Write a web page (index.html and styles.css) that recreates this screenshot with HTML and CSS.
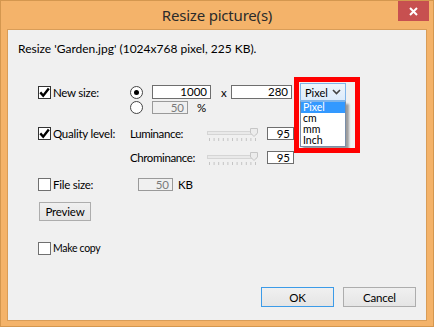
FILE: index.html
```html
<!DOCTYPE html>
<html>
<head>
<meta charset="utf-8">
<link rel="stylesheet" href="styles.css">
</head>
<body>
<div class="window">
  <div class="titlebar">
    <span class="tb-left"></span>
    <span class="title">Resize picture(s)</span>
    <span class="tb-right">
      <span class="close"><svg width="9" height="9" viewBox="0 0 9 9"><path d="M1 1 L8 8 M8 1 L1 8" stroke="#fff" stroke-width="2" fill="none"/></svg></span>
    </span>
  </div>
  <div class="client">
    <p class="info">Resize 'Garden.jpg' (1024x768 pixel, 225 KB).</p>

    <div class="row r1">
      <div class="colA"><span class="cb on"><svg width="11" height="11" viewBox="0 0 11 11"><path d="M1.3 5.4 L4.2 8.7 L9.8 1.6" stroke="#000" stroke-width="2.4" fill="none"/></svg></span><span class="lbl">New size:</span></div>
      <span class="radio on"></span>
      <span class="field w59 m9">1000</span>
      <span class="times">x</span>
      <span class="field w61">280</span>
      <div class="select-wrap">
        <div class="select"><span>Pixel</span><svg width="9" height="6" viewBox="0 0 9 6"><path d="M1 1 L4.5 4.5 L8 1" stroke="#444" stroke-width="1.6" fill="none"/></svg></div>
        <ul class="list">
          <li class="sel">Pixel</li>
          <li>cm</li>
          <li>mm</li>
          <li>Inch</li>
        </ul>
        <div class="highlight"></div>
      </div>
    </div>

    <div class="row r2 indent">
      <span class="radio"></span>
      <span class="field dis w36 m9">50</span>
      <span class="unit m9">%</span>
    </div>

    <div class="row r3">
      <div class="colA"><span class="cb on"><svg width="11" height="11" viewBox="0 0 11 11"><path d="M1.3 5.4 L4.2 8.7 L9.8 1.6" stroke="#000" stroke-width="2.4" fill="none"/></svg></span><span class="lbl">Quality level:</span></div>
      <span class="sublbl">Luminance:</span>
      <svg class="slider" width="51" height="16" viewBox="0 0 51 16">
        <rect x="0.5" y="4.5" width="49" height="3" fill="#e9e9e9" stroke="#d5d5d5"/>
        <path d="M43.5 1.5 H50.5 V6 L47 9.5 L43.5 6 Z" fill="#ececec" stroke="#c6c6c6"/>
        <path d="M2.5 11v3M7.1 11v3M11.7 11v3M16.3 11v3M20.9 11v3M25.5 11v3M30.1 11v3M34.7 11v3M39.3 11v3M43.9 11v3M48.5 11v3" stroke="#c4c4c4" stroke-width="1"/>
      </svg>
      <span class="field w27 m9">95</span>
    </div>

    <div class="row r4 indent">
      <span class="sublbl">Chrominance:</span>
      <svg class="slider" width="51" height="16" viewBox="0 0 51 16">
        <rect x="0.5" y="4.5" width="49" height="3" fill="#e9e9e9" stroke="#d5d5d5"/>
        <path d="M43.5 1.5 H50.5 V6 L47 9.5 L43.5 6 Z" fill="#ececec" stroke="#c6c6c6"/>
        <path d="M2.5 11v3M7.1 11v3M11.7 11v3M16.3 11v3M20.9 11v3M25.5 11v3M30.1 11v3M34.7 11v3M39.3 11v3M43.9 11v3M48.5 11v3" stroke="#c4c4c4" stroke-width="1"/>
      </svg>
      <span class="field w27 m9">95</span>
    </div>

    <div class="row r5">
      <div class="colA"><span class="cb"></span><span class="lbl">File size:</span></div>
      <span class="field dis w35 m8">50</span>
      <span class="unit m5">KB</span>
    </div>

    <div class="r6">
      <span class="btn preview">Preview</span>
    </div>

    <div class="row r7">
      <span class="cb"></span><span class="lbl small">Make copy</span>
    </div>

    <div class="buttons">
      <span class="btn dlg default">OK</span>
      <span class="btn dlg">Cancel</span>
    </div>
  </div>
</div>
</body>
</html>
```

FILE: styles.css
```css
* { box-sizing: border-box; }

body {
  margin: 0;
  font-family: Lato, "Noto Sans", sans-serif;
  font-size: 11px;
  color: #000;
}

.window {
  width: 434px;
  height: 327px;
  background: #f4b36a;
  border: 1px solid #d4974f;
  display: flex;
  flex-direction: column;
}

.titlebar {
  height: 28px;
  display: grid;
  grid-template-columns: 1fr auto 1fr;
  align-items: start;
}

.title {
  font-family: "Noto Sans", sans-serif;
  font-size: 15px;
  line-height: 28px;
  color: #2b2b2b;
  letter-spacing: -0.2px;
}

.tb-right {
  justify-self: end;
}

.close {
  width: 31px;
  height: 20px;
  margin-right: 4px;
  background: #c75050;
  display: flex;
  align-items: center;
  justify-content: center;
}

.client {
  margin: 0 6px;
  height: 292px;
  border: 1px solid #d99d58;
  background: #f0f0f0;
  padding-top: 12px;
  display: flex;
  flex-direction: column;
}

.info {
  margin: 0 0 0 10px;
  line-height: 14px;
  font-size: 12px;
}

.row {
  display: flex;
  align-items: center;
  padding-left: 30px;
  height: 13px;
}

.row.indent {
  padding-left: 122px;
}

.r1 { margin-top: 27px; height: 18px; }
.r2 { margin-top: 0; }
.r3 { margin-top: 13px; }
.r4 { margin-top: 11px; }
.r5 { margin-top: 14px; }
.r6 { margin-top: 11px; padding-left: 31px; display: flex; }
.r7 { margin-top: 21px; }

.colA {
  width: 92px;
  display: flex;
  align-items: center;
}

.lbl {
  margin-left: 2px;
  line-height: 13px;
  font-size: 11.5px;
  letter-spacing: -0.25px;
  white-space: nowrap;
}

.lbl.small {
  font-size: 10.5px;
  letter-spacing: -0.3px;
}

.cb {
  width: 13px;
  height: 13px;
  flex: none;
  background: #fff;
  border: 1px solid #707070;
  display: flex;
  align-items: center;
  justify-content: center;
}

.cb.on {
  border-color: #333;
}

.radio {
  width: 13px;
  height: 13px;
  flex: none;
  border-radius: 50%;
  border: 1px solid #444;
  background: #fff;
  display: flex;
  align-items: center;
  justify-content: center;
}

.radio.on::after {
  content: "";
  width: 5px;
  height: 5px;
  border-radius: 50%;
  background: #000;
}

.field {
  height: 13px;
  flex: none;
  background: #fff;
  border: 1px solid #6e6e6e;
  text-align: right;
  padding-right: 3px;
  line-height: 11px;
  font-size: 11.5px;
}

.r1 .field {
  height: 14px;
  line-height: 12px;
}

.field.dis {
  background: #f0f0f0;
  border-color: #9a9a9a;
  color: #7a7a7a;
}

.w59 { width: 59px; }
.w61 { width: 61px; }
.w36 { width: 36px; }
.w35 { width: 35px; }
.w27 { width: 27px; }

.m9 { margin-left: 9px; }
.m8 { margin-left: 8px; }
.m5 { margin-left: 5px; }

.times {
  width: 20px;
  padding-left: 10px;
  line-height: 13px;
  font-size: 11.5px;
}

.unit {
  line-height: 13px;
  font-size: 11.5px;
}

.sublbl {
  width: 77px;
  line-height: 13px;
  font-size: 11.5px;
  letter-spacing: -0.4px;
  white-space: nowrap;
}

.slider {
  flex: none;
  margin-top: 2px;
}

.select-wrap {
  position: relative;
  width: 46px;
  height: 18px;
  margin-left: 8px;
  flex: none;
}

.select {
  height: 18px;
  border: 1px solid #7eb4ea;
  background: linear-gradient(#eef5fc, #dcebfb);
  font-size: 11px;
  padding: 0 4px 0 4px;
  display: flex;
  align-items: center;
  justify-content: space-between;
}

.list {
  position: absolute;
  left: 0;
  top: 18px;
  width: 46px;
  margin: 0;
  padding: 0;
  list-style: none;
  background: #fff;
  border: 1px solid #7a8ea8;
  border-top-color: #7eb4ea;
  box-shadow: 3px 3px 2px rgba(0, 0, 0, 0.35);
  font-size: 10.5px;
}

.list li {
  height: 11px;
  line-height: 11px;
  padding-left: 2px;
}

.list li.sel {
  background: #3399ff;
  color: #fff;
}

.highlight {
  position: absolute;
  left: -6px;
  top: -6px;
  width: 66px;
  height: 76px;
  border: 5px solid #ff0000;
}

.btn {
  display: flex;
  align-items: center;
  justify-content: center;
  border: 1px solid #adadad;
  background: linear-gradient(#f0f0f0, #e5e5e5);
  font-size: 11.5px;
  letter-spacing: -0.2px;
}

.preview {
  width: 52px;
  height: 19px;
}

.buttons {
  margin-top: 32px;
  display: flex;
  justify-content: flex-end;
  gap: 9px;
  padding-right: 10px;
}

.dlg {
  width: 73px;
  height: 20px;
}

.dlg.default {
  border-color: #3c9be8;
}
```
